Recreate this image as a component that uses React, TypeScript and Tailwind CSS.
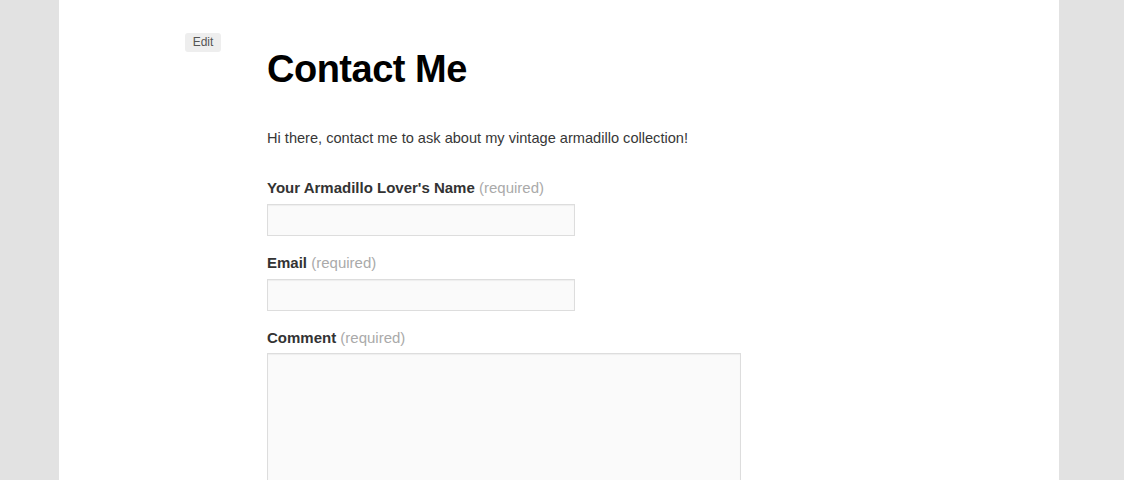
export default function App() {
  const fields = [
    { label: "Your Armadillo Lover's Name", type: "text" },
    { label: "Email", type: "email" },
  ];

  return (
    <div className="h-[480px] overflow-hidden bg-[#e2e2e2] font-['Liberation_Sans',Arial,sans-serif]">
      <div className="ml-[59px] h-full w-[1000px] bg-white pt-[33px]">
        <div className="flex">
          {/* Edit link in the left gutter */}
          <div className="w-[208px] shrink-0 pl-[126px]">
            <button className="block h-[19px] w-[36px] rounded-[3px] bg-[#eeeeee] text-[12px] leading-[19px] text-[#555]">
              Edit
            </button>
          </div>

          <div className="w-[474px]">
            <h1 className="mt-[13px] text-[38px] leading-[46px] font-bold tracking-[-0.5px] text-black">
              Contact Me
            </h1>
            <p className="mt-[34px] text-[14.6px] leading-[24px] text-[#373737]">
              Hi there, contact me to ask about my vintage armadillo collection!
            </p>

            <form className="mt-[27px]">
              {fields.map((f) => (
                <div key={f.label} className="mb-[16px]">
                  <label className="block text-[15px] leading-[21px] font-bold text-[#333]">
                    {f.label} <span className="font-normal text-[#aaa]">(required)</span>
                  </label>
                  <input
                    type={f.type}
                    className="mt-[6px] block h-[32px] w-[308px] border border-[#ddd] bg-[#fafafa] shadow-[inset_0_1px_1px_rgba(0,0,0,0.05)] outline-none"
                  />
                </div>
              ))}
              <div>
                <label className="block text-[15px] leading-[21px] font-bold text-[#333]">
                  Comment <span className="font-normal text-[#aaa]">(required)</span>
                </label>
                <textarea className="mt-[5px] block h-[200px] w-[474px] resize-none border border-[#ddd] bg-[#fafafa] shadow-[inset_0_1px_1px_rgba(0,0,0,0.05)] outline-none" />
              </div>
            </form>
          </div>
        </div>
      </div>
    </div>
  );
}
